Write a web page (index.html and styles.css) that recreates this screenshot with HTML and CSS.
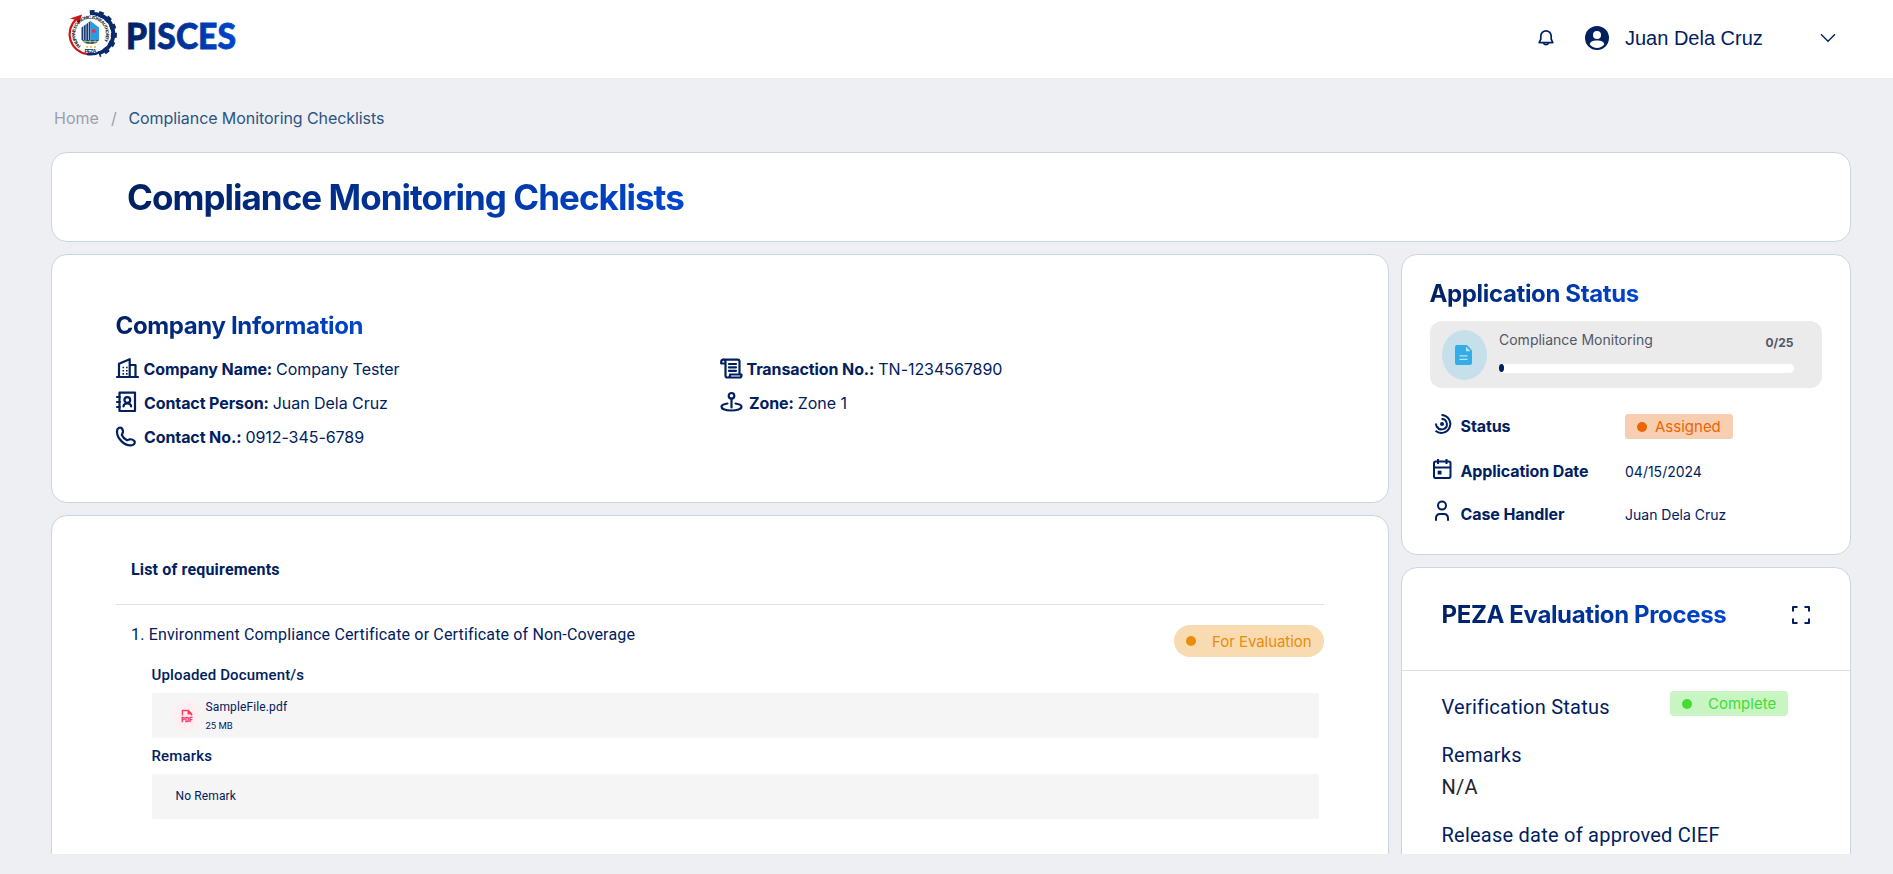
FILE: index.html
```html
<!DOCTYPE html>
<html lang="en">
<head>
<meta charset="utf-8">
<title>PISCES - Compliance Monitoring Checklists</title>
<link rel="stylesheet" href="styles.css">
</head>
<body>
<header class="topbar">
  <svg class="logo" width="180" height="50" viewBox="0 0 180 50">
    <defs>
      <linearGradient id="brand" x1="0" x2="1"><stop offset="0" stop-color="#002060"/><stop offset="1" stop-color="#0046d0"/></linearGradient>
      <path id="ring" d="M13 37A15.300 15.300 0 1 1 32 37"/>
    </defs>
    <path d="M22 5.200A20 20 0 0 1 31 44.100" fill="none" stroke="#0a2a6b" stroke-width="4"/>
    <path d="M22 4.200A21 21 0 0 1 31 45.100" fill="none" stroke="#0a2a6b" stroke-width="6" stroke-dasharray="4.500 4.200"/>
    <circle cx="22.500" cy="25" r="19" fill="#fff"/>
    <path d="M8 10.500A20 20 0 0 0 19 45" fill="none" stroke="#c9141d" stroke-width="2.200"/>
    <path d="M19 45A20 20 0 0 0 32 43" fill="none" stroke="#0a2a6b" stroke-width="2.500"/>
    <path d="M2 9.500L14 5.500L11 15L8 11Z" fill="#d0141c"/>
    <text class="seal"><textPath href="#ring" textLength="69" lengthAdjust="spacing">PHILIPPINE ECONOMIC ZONE AUTHORITY</textPath></text>
    <path d="M13.500 18.500L22.500 12V31H13.500Z" fill="#173c75"/>
    <path d="M22.500 12L31 18.500V31H22.500Z" fill="#2b9be6"/>
    <path d="M15.500 17V31M18 15V31M20.500 13.500V31" stroke="#dce8f5" stroke-width=".7"/>
    <path d="M24 20.500h3.500v3.200h-3.500z" fill="#e63244"/>
    <path d="M14 31H31Q29.500 35 22.500 35T14 31Z" fill="#31574d"/>
    <path d="M14 32.500H31M17 31V34M22 31V35M27 31V34" stroke="#fff" stroke-width=".5"/>
    <path d="M18 38h10" stroke="#f5b82e" stroke-width="1.500" stroke-dasharray="2 2"/>
    <text class="peza" x="16.500" y="43.500" textLength="12">PEZA</text>
    <text class="wordmark" x="58" y="39.500" textLength="110" lengthAdjust="spacingAndGlyphs" fill="url(#brand)" stroke="url(#brand)" stroke-width=".8">PISCES</text>
  </svg>
  <div class="account">
    <svg class="bell" width="16" height="18" viewBox="0 0 16 18" fill="none" stroke="#002060" stroke-width="1.700" stroke-linejoin="round"><path d="M2.800 7a5.200 5.200 0 0 1 10.400 0v3.200l1.600 3.400H1.200L2.800 10.200Z"/><path d="M5.600 13.900a2.500 2.500 0 0 0 4.800 0"/></svg>
    <svg class="avatar" width="24" height="24" viewBox="0 0 24 24"><circle cx="12" cy="12" r="12" fill="#002060"/><circle cx="12" cy="9" r="4" fill="#fff"/><path d="M4.800 18.500C5 15.800 7.500 14.500 12 14.500s7 1.300 7.200 4A9.600 9.600 0 0 1 12 22a9.600 9.600 0 0 1-7.200-3.500Z" fill="#fff"/></svg>
    <span class="user">Juan Dela Cruz</span>
    <svg class="chevron" width="16" height="10" viewBox="0 0 16 10" fill="none" stroke="#002060" stroke-width="1.400"><path d="M1 1.200L8 8.200L15 1.200"/></svg>
  </div>
</header>
<main class="page">
  <nav class="crumbs"><span class="home">Home</span><span class="slash">/</span><span class="here">Compliance Monitoring Checklists</span></nav>
  <section class="card title-card"><h1 class="gradient">Compliance Monitoring Checklists</h1></section>
  <div class="columns">
    <div class="main-col">
      <section class="card company">
        <h2 class="gradient">Company Information</h2>
        <div class="facts">
          <div class="fact"><svg class="ico" viewBox="0 0 24 24"><path d="M1 20H22M3 20V6.800L13.700 2.200V20M13.700 8H19.500V20"/><path class="windows" d="M6.500 9.700h1.600v1.600h-1.600zM10 9.700h1.600v1.600h-1.600zM6.500 12.900h1.600v1.600h-1.600zM10 12.900h1.600v1.600h-1.600zM6.500 16.100h1.600v1.600h-1.600zM10 16.100h1.600v1.600h-1.600z"/></svg><b>Company Name:</b><span>Company Tester</span></div>
          <div class="fact"><svg class="ico" viewBox="0 0 24 24"><path d="M3.500 1.700H19V20H3.500ZM1 6H4M1 11H4M1 16H4M7.500 15.500c0-1.800 1.500-3 3.800-3s3.800 1.200 3.800 3"/><circle cx="11.300" cy="9" r="2.900"/></svg><b class="wide">Contact Person:</b><span>Juan Dela Cruz</span></div>
          <div class="fact"><svg class="ico" viewBox="0 0 24 24"><path d="M1.800 3.800C2.700 2.500 4 2.500 5 2.800C6.300 3.500 7 5.500 7 7L5.800 10Q7.500 13.500 11 15.300L14 14.300C15.800 14 18 15.500 18.700 16.500C19.300 18.300 17.700 19.800 15.500 20.300C8 21 .8 13 1 6.500C1 5.300 1.200 4.500 1.800 3.800Z"/></svg><b class="wide">Contact No.:</b><span>0912-345-6789</span></div>
        </div>
        <div class="facts">
          <div class="fact"><svg class="ico" viewBox="0 0 24 24"><path d="M5.500 7V5C5.500 1.800 1.200 1.800 1.200 5V6.500H5.500M3.500 2.700H17.500Q19.500 2.700 19.500 4.700V17M5.500 7V18.500Q5.500 20.500 7.500 20.500M10 17.500H21.500V18.500Q21.500 20.500 19.500 20.500H7.500M10 17.500V18.500Q10 20.500 8 20.500M9 7H16M9 10.400H16M9 13.800H16"/></svg><b class="txn">Transaction No.:</b><span>TN-1234567890</span></div>
          <div class="fact"><svg class="ico" viewBox="0 0 24 24"><circle cx="11.500" cy="4.800" r="2.800"/><path d="M11.500 7.800V16.500M7.500 12.500C3.800 13 1.500 14.200 1.500 15.800C1.500 18 6 19.500 11.500 19.500S21.500 18 21.500 15.800C21.500 14.200 19.200 13 15.500 12.500"/></svg><b class="zone">Zone:</b><span>Zone 1</span></div>
        </div>
      </section>
      <section class="card requirements">
        <h3>List of requirements</h3>
        <div class="requirement">
          <p class="req-name">1. Environment Compliance Certificate or Certificate of Non-Coverage</p>
          <span class="badge evaluating"><i class="dot"></i>For Evaluation</span>
        </div>
        <div class="req-body">
          <h4>Uploaded Document/s</h4>
          <div class="panel file">
            <span class="file-icon"><svg width="12" height="14" viewBox="0 0 14 16" fill="none" stroke="#f23d5f" stroke-width="1.700"><path d="M1.700 7.500V1.700H8.500L12.300 5.500V7.500M8.500 1.700V5.300H12.300"/><text class="pdf" x=".5" y="15" textLength="13">PDF</text></svg></span>
            <div><p class="file-name">SampleFile.pdf</p><p class="file-size">25 MB</p></div>
          </div>
          <h4 class="remarks-head">Remarks</h4>
          <div class="panel remark">No Remark</div>
        </div>
      </section>
    </div>
    <div class="side-col">
      <section class="card status-card">
        <h2 class="gradient">Application Status</h2>
        <div class="progress">
          <span class="disc"><svg width="18" height="20" viewBox="0 0 18 20"><path d="M2 0H12L17 5.500V18a2 2 0 0 1-2 2H2a2 2 0 0 1-2-2V2a2 2 0 0 1 2-2Z" fill="#33ade6"/><path d="M11 1.800V6.200H15.500Z" fill="#c5dfeb"/><path d="M4.500 10.800h8M4.500 14.300h8" stroke="#c5dfeb" stroke-width="1.300"/></svg></span>
          <div class="meter">
            <div class="meter-head"><span>Compliance Monitoring</span><b>0/25</b></div>
            <div class="track"><div class="fill"></div></div>
          </div>
        </div>
        <div class="row first"><svg class="mini" viewBox="0 0 20 22"><circle cx="9" cy="11" r="2" fill="#002060" stroke="none"/><path d="M8.500 1.900A9 9 0 1 1 2.500 17.800M8.500 6A5.200 5.200 0 1 1 4 13.500M3 10.500Q3 16 8.500 16.300" /></svg><b>Status</b><span class="badge assigned"><i class="dot"></i>Assigned</span></div>
        <div class="row date"><svg class="mini" viewBox="0 0 20 22"><rect x="1" y="3.500" width="16.500" height="16.500" rx="1.800"/><path d="M1 9.500H17.500M5 1V6M13.500 1V6"/><path d="M4.700 12.700h3.800v3.800h-3.800z" fill="#002060" stroke="none"/></svg><b>Application Date</b><span>04/15/2024</span></div>
        <div class="row handler"><svg class="mini" viewBox="0 0 20 22"><circle cx="9" cy="5.600" r="4"/><path d="M3 20.800V18.500Q3 14 7 14H11Q15 14 15 18.500V20.800"/></svg><b>Case Handler</b><span>Juan Dela Cruz</span></div>
      </section>
      <section class="card process">
        <div class="process-head"><h2 class="gradient">PEZA Evaluation Process</h2><svg width="18" height="18" viewBox="0 0 18 18" fill="none" stroke="#002060" stroke-width="2" stroke-linejoin="round"><path d="M1 5.500V1H5.500M12.500 1H17V5.500M17 12.500V17H12.500M5.500 17H1V12.500"/></svg></div>
        <div class="process-body">
          <div class="verify"><span>Verification Status</span><span class="badge complete"><i class="dot"></i>Complete</span></div>
          <p class="label">Remarks</p>
          <p class="value">N/A</p>
          <p class="label release">Release date of approved CIEF</p>
        </div>
      </section>
    </div>
  </div>
</main>
</body>
</html>
```
FILE: styles.css
```css
* { box-sizing: border-box; }
body { margin: 0; height: 874px; overflow: hidden; background: #edeff3; color: #002060; font-family: Inter, sans-serif; font-size: 16px; display: flex; flex-direction: column; }
h1, h2, h3, h4, p { margin: 0; }
svg { flex: none; display: block; overflow: visible; }
.gradient { width: max-content; color: transparent; background: linear-gradient(90deg, #002060, #0046d0); background-clip: text; -webkit-background-clip: text; }
h2 { font-size: 24px; line-height: 32px; font-weight: 700; letter-spacing: -.360px; }

.topbar { flex: none; height: 78px; background: #fff; display: flex; justify-content: space-between; padding: 9px 57px 0 68px; }
.wordmark { font: 900 36px "Lato", sans-serif; }
.seal { font: 700 4.500px "Liberation Sans", sans-serif; fill: #111; }
.peza { font: 700 5.500px "Liberation Sans", sans-serif; fill: #0a2a6b; }
.account { display: flex; align-items: center; height: 58px; }
.bell { margin-top: -1px; }
.avatar { margin-left: 31px; }
.user { font: 20px/24px "Liberation Sans", sans-serif; margin-left: 16px; width: 195px; }

.page { flex: none; height: 776px; overflow: hidden; padding: 0 42px 0 51px; }
.crumbs { height: 74px; display: flex; padding: 28px 0 0 3px; line-height: 24px; }
.home { color: #9b9eac; width: 57px; }
.slash { color: #9b9eac; width: 17.500px; }
.here { color: #2c5484; letter-spacing: -.080px; }
.card { background: #fff; border: 1px solid #cbd5e1; border-radius: 16px; }
.title-card { height: 90px; padding-left: 75px; display: flex; align-items: center; }
h1 { font-size: 35px; font-weight: 700; line-height: 48px; letter-spacing: -.970px; }
.columns { display: flex; gap: 12px; margin-top: 12px; }
.main-col { width: 1338px; display: flex; flex-direction: column; gap: 12px; }
.side-col { width: 450px; display: flex; flex-direction: column; gap: 12px; }

.company { height: 249px; padding: 55px 64px 0 63.500px; display: grid; grid-template-columns: 604px 1fr; grid-template-rows: 42px auto; }
.company h2 { grid-column: 1 / -1; }
.fact { display: flex; height: 34px; line-height: 34px; align-items: center; }
.fact b, .row b { font-weight: 700; letter-spacing: -.100px; }
.fact span { letter-spacing: -.050px; }
.fact b { margin: 0 4px 0 4px; }
.fact b.txn { margin-left: 3px; }
.fact b.wide { margin-left: 4.500px; }
.fact b.zone { margin-left: 5.500px; }
.ico { width: 24px; height: 24px; fill: none; stroke: #002060; stroke-width: 2.200; stroke-linejoin: round; stroke-linecap: round; }
.windows { fill: #002060; stroke: none; }

.requirements { height: 420px; padding: 39px 64px; font-family: Roboto, sans-serif; }
h3 { font-size: 16px; font-weight: 700; line-height: 30px; height: 50px; padding-left: 15px; border-bottom: 1px solid #dcdfe0; letter-spacing: .170px; }
.requirement { display: flex; justify-content: space-between; padding: 20px 0 0 15px; height: 60px; }
.req-name { line-height: 20px; letter-spacing: .160px; }
.badge { display: flex; align-items: center; font-family: Inter, sans-serif; font-size: 15px; white-space: nowrap; letter-spacing: 0; }
.dot { width: 10px; height: 10px; border-radius: 50%; background: currentColor; }
.evaluating { width: 150px; height: 32px; padding-left: 12px; gap: 16px; border-radius: 16px; background: #f8dbb1; color: #eb8c0b; letter-spacing: -.050px; }
.req-body { padding: 0 5px 0 35.500px; }
h4 { font-size: 15px; font-weight: 500; line-height: 20px; height: 28px; letter-spacing: .150px; }
.panel { height: 45px; background: #f5f5f5; border-radius: 2px; font-size: 12px; letter-spacing: .130px; }
.file { display: flex; align-items: center; padding-left: 22px; }
.file-icon { width: 26px; height: 30px; border-radius: 50%; background: #ffeff0; display: grid; place-items: center; margin-right: 6px; }
.pdf { font: 900 6.500px Inter, sans-serif; fill: #f23d5f; stroke: #f23d5f; stroke-width: .3px; letter-spacing: 0; }
.file-name { line-height: 20px; margin-top: 1px; }
.file-size { font-size: 9.500px; line-height: 18px; letter-spacing: 0; }
.remarks-head { margin-top: 8px; }
.remark { line-height: 44px; padding-left: 24px; }

.status-card { height: 301px; padding: 23px 28px 0 27.500px; }
.progress { height: 67px; margin-top: 11px; border-radius: 12px; background: #ebebeb; display: flex; padding: 9px 28px 0 12px; }
.disc { width: 45px; height: 50px; border-radius: 50%; background: #c5dfeb; display: grid; place-items: center; margin-right: 12.500px; }
.meter { flex: 1; }
.meter-head { display: flex; justify-content: space-between; height: 34px; font-size: 14px; line-height: 20px; color: #515866; }
.meter-head b { font-size: 12px; font-weight: 700; line-height: 25px; padding-right: .5px; }
.track { height: 9px; border-radius: 5px; background: #fff; }
.fill { width: 5px; height: 8px; border-radius: 50%; background: #002060; }
.row { display: grid; grid-template-columns: 31px 164.500px auto; align-items: center; height: 25px; font-size: 14px; }
.row b { font-size: 16px; margin-top: -1px; }
.first { margin-top: 26px; }
.date { margin-top: 20px; }
.handler { margin-top: 18px; }
.mini { width: 20px; height: 22px; margin: -5px 0 0 3px; fill: none; stroke: #002060; stroke-width: 2; }
.handler .mini { margin-top: -7px; }
.assigned { width: 108px; height: 25px; padding-left: 12px; gap: 8px; border-radius: 3px; background: #f8ceb0; color: #eb6505; }

.process { height: 400px; font-family: Roboto, sans-serif; font-size: 20px; }
.process-head { height: 103px; padding: 31px 40px 0 39.500px; display: flex; justify-content: space-between; border-bottom: 1px solid #dcdfe4; font-family: Inter, sans-serif; }
.process-head svg { margin-top: 7px; }
.process-body { padding: 20px 62px 0 39.500px; letter-spacing: .240px; }
.verify { display: flex; justify-content: space-between; height: 50px; line-height: 32px; }
.complete { width: 118px; height: 25px; padding-left: 12px; gap: 16px; border-radius: 4px; background: #c8f5c1; color: #43dc35; }
.label, .value { line-height: 28px; }
.value { color: #212529; margin-top: 4px; }
.release { margin-top: 20px; }
```
